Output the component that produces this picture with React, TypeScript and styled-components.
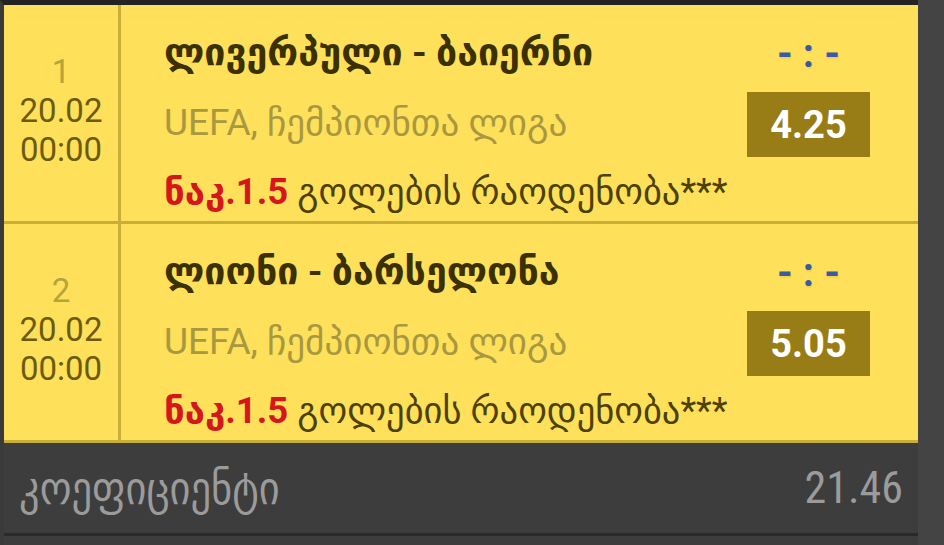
import React from "react";
import styled, { createGlobalStyle } from "styled-components";

const Global = createGlobalStyle`
  html, body { margin: 0; padding: 0; background: #444444; }
  body { font-family: Roboto, "DejaVu Sans", sans-serif; }
  * { box-sizing: border-box; }
`;

const Page = styled.div`
  width: 944px;
  height: 545px;
  background: #444444;
  overflow: hidden;
`;

const Column = styled.div`
  width: 918px;
  height: 545px;
  border-left: 4px solid #3a3a3a;
  border-top: 5px solid #232323;
  background: #3d3d3d;
  display: flex;
  flex-direction: column;
`;

const Row = styled.div`
  display: grid;
  grid-template-columns: 117px 1fr;
  height: 219px;
  background: #ffe05a;
  border-bottom: 3px solid #c9ae37;
`;

const Meta = styled.div`
  border-right: 3px solid #c9ae37;
  display: flex;
  flex-direction: column;
  align-items: center;
  justify-content: center;
  padding-bottom: 6px;
  font-size: 33px;
  line-height: 39px;
  color: #6b5c0c;
`;

const Index = styled.div`
  color: #b5a43a;
`;

const Body = styled.div`
  display: grid;
  grid-template-columns: 1fr 123px;
  column-gap: 10px;
  padding: 0 48px 0 43px;
`;

const Texts = styled.div`
  display: flex;
  flex-direction: column;
`;

const Line = styled.div<{ $top: number }>`
  margin-top: ${(p) => p.$top}px;
  font-size: 37px;
  line-height: 40px;
  white-space: nowrap;
`;

const Title = styled(Line)`
  font-weight: 700;
  font-size: 37.5px;
  color: #3b3100;
`;

const League = styled(Line)`
  color: #a89840;
`;

const Market = styled(Line)`
  font-size: 36.5px;
  color: #4d4100;
`;

const Handicap = styled.span`
  color: #d4171d;
  font-weight: 700;
`;

const Side = styled.div`
  display: flex;
  flex-direction: column;
  align-items: center;
`;

const Score = styled.div`
  margin-top: 29px;
  height: 40px;
  font-size: 40px;
  line-height: 40px;
  font-weight: 700;
  color: #3a5aa8;
  letter-spacing: 10px;
  padding-left: 10px;
  white-space: nowrap;
  text-shadow: 1px 2px 0 #f6d24e;
`;

const Odds = styled.div`
  margin-top: 18px;
  width: 123px;
  height: 65px;
  background: #987d16;
  color: #ffffff;
  font-weight: 700;
  font-size: 38px;
  display: flex;
  align-items: center;
  justify-content: center;
`;

const Footer = styled.div`
  height: 93px;
  display: flex;
  align-items: center;
  justify-content: space-between;
  padding: 0 15px 0 15px;
  color: #9b9b9b;
  font-size: 44px;
  font-stretch: condensed;
  border-bottom: 3px solid #2a2a2a;
`;

const FooterLabel = styled.span`
  font-size: 45px;
`;

const matches = [
  { idx: 1, title: "ლივერპული - ბაიერნი", odds: "4.25" },
  { idx: 2, title: "ლიონი - ბარსელონა", odds: "5.05" },
];

export default function App() {
  return (
    <Page>
      <Global />
      <Column>
        {matches.map((m) => (
          <Row key={m.idx}>
            <Meta>
              <Index>{m.idx}</Index>
              <div>20.02</div>
              <div>00:00</div>
            </Meta>
            <Body>
              <Texts>
                <Title $top={27}>{m.title}</Title>
                <League $top={31}>UEFA, ჩემპიონთა ლიგა</League>
                <Market $top={29}>
                  <Handicap>ნაკ.1.5</Handicap> გოლების რაოდენობა***
                </Market>
              </Texts>
              <Side>
                <Score>-:-</Score>
                <Odds>{m.odds}</Odds>
              </Side>
            </Body>
          </Row>
        ))}
        <Footer>
          <FooterLabel>კოეფიციენტი</FooterLabel>
          <span>21.46</span>
        </Footer>
      </Column>
    </Page>
  );
}
